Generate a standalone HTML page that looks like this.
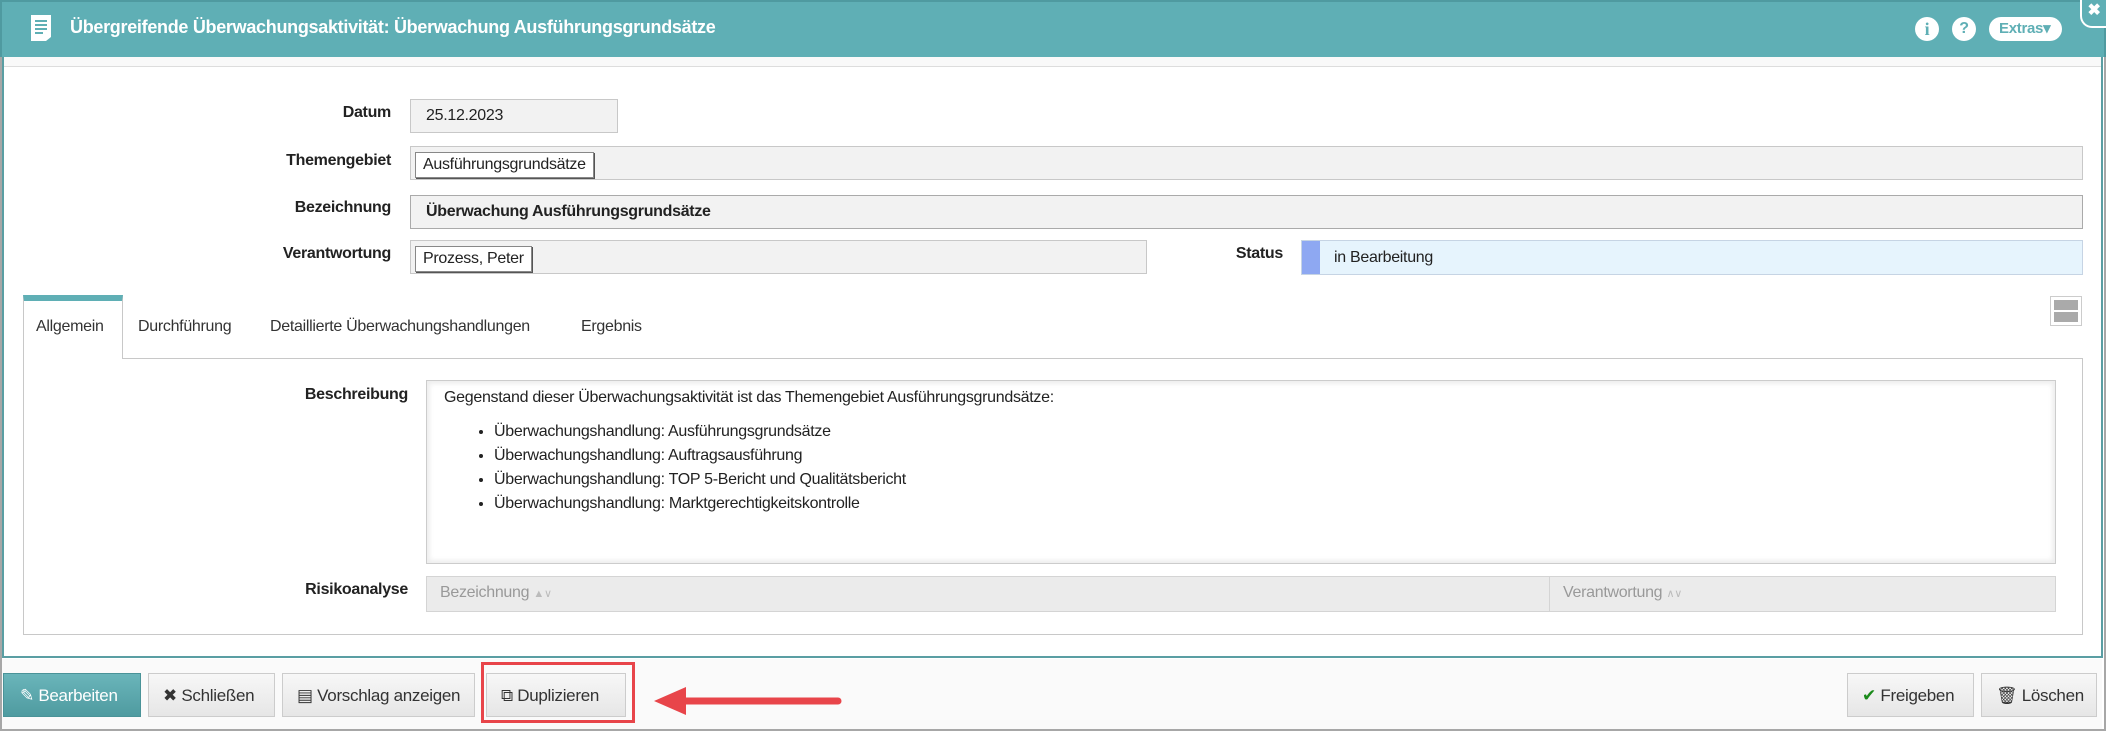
<!DOCTYPE html>
<html><head><meta charset="utf-8"><style>
*{box-sizing:border-box;margin:0;padding:0}
body{width:2106px;height:731px;background:#fff;font-family:"Liberation Sans",sans-serif;font-size:16px;color:#222;position:relative;overflow:hidden;letter-spacing:-0.3px}
.abs{position:absolute}
.hdr{left:0;top:0;width:2106px;height:57px;background:#5fafb5;border:2px solid #4f9aa0;border-bottom:none}
.title{left:70px;top:17px;color:#fff;font-weight:bold;font-size:18px}
.lbl{text-align:right;width:300px;font-weight:bold;font-size:16px}
.inp{background:#f2f2f2;border:1px solid #c8c8c8;height:34px}
.chip{position:absolute;left:4px;top:5px;height:26px;padding:3px 7px;background:#fff;border:1px solid #888;box-shadow:1px 1px 0 #555;font-size:16px}
.tab{top:318px;font-size:16px;color:#333}
.btn{top:673px;height:44px;border:1px solid #ccc;background:linear-gradient(#f7f7f7,#e6e6e6);font-size:17px;padding-top:12px;color:#333}
li{margin-bottom:6px}
</style></head><body>
<div class="abs" style="left:0;top:0;width:2106px;height:731px;border:2px solid #a7a7a7"></div>
<div class="abs hdr"></div>
<svg class="abs" style="left:30px;top:14px" width="22" height="28" viewBox="0 0 22 28"><path d="M1 1h20v22l-5 4H1z" fill="#fff"/><path d="M5 7h12M5 11h12M5 15h12M5 19h8" stroke="#5fafb5" stroke-width="2"/></svg>
<div class="abs title">Übergreifende Überwachungsaktivität: Überwachung Ausführungsgrundsätze</div>
<div class="abs" style="left:1915px;top:17px;width:24px;height:24px;border-radius:12px;background:#fff;color:#5fafb5;font-weight:bold;text-align:center;font-family:'Liberation Serif';font-size:18px;line-height:24px">i</div>
<div class="abs" style="left:1952px;top:17px;width:24px;height:24px;border-radius:12px;background:#fff;color:#5fafb5;font-weight:bold;text-align:center;font-size:16px;line-height:24px">?</div>
<div class="abs" style="left:1989px;top:17px;width:73px;height:24px;border-radius:12px;background:#fff;color:#5fafb5;font-weight:bold;font-size:15px;line-height:24px;padding-left:10px">Extras▾</div>
<div class="abs" style="left:2080px;top:0;width:26px;height:28px;background:#5fafb5;border-left:2px solid #fff;border-bottom:2px solid #fff;border-bottom-left-radius:12px;color:#fff;font-weight:bold;text-align:center;font-size:16px">✖</div>
<div class="abs" style="left:2px;top:57px;width:2100px;height:10px;background:#f9f9f9;border-bottom:1px solid #ddd"></div>
<div class="abs" style="left:2px;top:57px;width:2101px;height:601px;border:2px solid #5a9ea3;border-top:none"></div>

<div class="abs lbl" style="left:91px;top:104px">Datum</div>
<div class="abs inp" style="left:410px;top:99px;width:208px;padding:7px 15px">25.12.2023</div>
<div class="abs lbl" style="left:91px;top:152px">Themengebiet</div>
<div class="abs inp" style="left:410px;top:146px;width:1673px"><span class="chip">Ausführungsgrundsätze</span></div>
<div class="abs lbl" style="left:91px;top:199px">Bezeichnung</div>
<div class="abs inp" style="left:410px;top:195px;width:1673px;border-color:#aaa;padding:7px 15px;font-weight:bold">Überwachung Ausführungsgrundsätze</div>
<div class="abs lbl" style="left:91px;top:245px">Verantwortung</div>
<div class="abs inp" style="left:410px;top:240px;width:737px"><span class="chip">Prozess, Peter</span></div>
<div class="abs lbl" style="left:983px;top:245px">Status</div>
<div class="abs" style="left:1301px;top:240px;width:782px;height:35px;background:#e6f4fd;border:1px solid #c6d4e4;padding:8px 0 0 32px">in Bearbeitung</div>
<div class="abs" style="left:1302px;top:241px;width:18px;height:33px;background:#8ea8f2"></div>

<div class="abs" style="left:23px;top:358px;width:2060px;height:277px;border:1px solid #c8c8c8"></div>
<div class="abs" style="left:23px;top:295px;width:100px;height:64px;background:#fff;border:1px solid #c8c8c8;border-bottom:none;border-top:6px solid #5fafb5"></div>
<div class="abs tab" style="left:36px">Allgemein</div>
<div class="abs tab" style="left:138px">Durchführung</div>
<div class="abs tab" style="left:270px">Detaillierte Überwachungshandlungen</div>
<div class="abs tab" style="left:581px">Ergebnis</div>
<div class="abs" style="left:2050px;top:296px;width:32px;height:30px;border:1px solid #ccc;padding:3px"><div style="height:10px;background:#aaa"></div><div style="height:2px"></div><div style="height:10px;background:#aaa"></div></div>

<div class="abs lbl" style="left:108px;top:386px">Beschreibung</div>
<div class="abs" style="left:426px;top:380px;width:1630px;height:184px;border:1px solid #ccc;box-shadow:inset 0 0 4px 3px #eee;padding:8px 17px;font-size:16px">
Gegenstand dieser Überwachungsaktivität ist das Themengebiet Ausführungsgrundsätze:
<ul style="margin:16px 0 0 50px">
<li>Überwachungshandlung: Ausführungsgrundsätze</li>
<li>Überwachungshandlung: Auftragsausführung</li>
<li>Überwachungshandlung: TOP 5-Bericht und Qualitätsbericht</li>
<li>Überwachungshandlung: Marktgerechtigkeitskontrolle</li></ul></div>
<div class="abs lbl" style="left:108px;top:581px">Risikoanalyse</div>
<div class="abs" style="left:426px;top:576px;width:1630px;height:36px;background:#ebebeb;border:1px solid #d4d4d4"></div>
<div class="abs" style="left:1549px;top:577px;width:1px;height:34px;background:#d4d4d4"></div>
<div class="abs" style="left:440px;top:584px;color:#999">Bezeichnung <span style="font-size:11px;color:#bbb">▲∨</span></div>
<div class="abs" style="left:1563px;top:584px;color:#999">Verantwortung <span style="font-size:11px;color:#bbb">∧∨</span></div>

<div class="abs" style="left:2px;top:659px;width:2100px;height:70px;background:#fafafa"></div>
<div class="abs btn" style="left:3px;width:138px;background:linear-gradient(#6ab5ba,#4f9ba0);color:#fff;border-color:#4a9398;padding-left:16px">✎ Bearbeiten</div>
<div class="abs btn" style="left:148px;width:127px;padding-left:14px">✖ Schließen</div>
<div class="abs btn" style="left:282px;width:193px;padding-left:14px">▤ Vorschlag anzeigen</div>
<div class="abs btn" style="left:486px;width:140px;padding-left:14px">⧉ Duplizieren</div>
<div class="abs" style="left:481px;top:662px;width:154px;height:61px;border:3px solid #e8454a"></div>
<svg class="abs" style="left:650px;top:685px" width="195" height="32"><path d="M188 16H30" stroke="#e8454a" stroke-width="7" stroke-linecap="round"/><path d="M4 16L36 2V30z" fill="#e8454a"/></svg>
<div class="abs btn" style="left:1847px;width:127px;padding-left:14px"><span style="color:#1a8a1a">✔</span> Freigeben</div>
<div class="abs btn" style="left:1981px;width:116px;padding-left:14px">🗑 Löschen</div>
</body></html>
